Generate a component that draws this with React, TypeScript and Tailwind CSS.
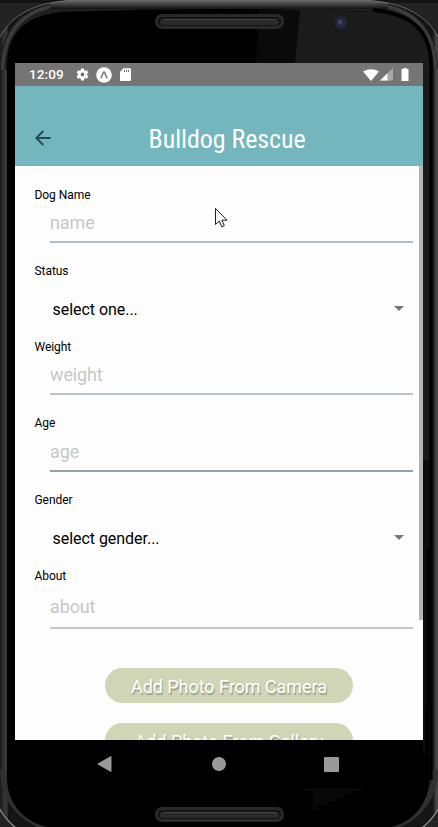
import React from "react";

function PhoneFrame() {
  return (
    <svg className="absolute inset-0" width="438" height="827" viewBox="0 0 438 827" aria-hidden="true">
      <defs>
        <linearGradient id="left" x1="0" x2="1" y1="0" y2="0">
          <stop offset="0" stopColor="#181818" />
          <stop offset="0.35" stopColor="#2b2b2b" />
          <stop offset="0.75" stopColor="#3a3a3a" />
          <stop offset="1" stopColor="#262626" />
        </linearGradient>
        <linearGradient id="top" x1="0" x2="0" y1="0" y2="1">
          <stop offset="0" stopColor="#6a6a6a" />
          <stop offset="0.5" stopColor="#3e3e3e" />
          <stop offset="1" stopColor="#101010" />
        </linearGradient>
        <clipPath id="body">
          <path d="M-1 38C10 16 34 2 72 0H366C404 2 428 16 439 38V807L425 828H15L-1 807Z" />
        </clipPath>
        <clipPath id="face">
          <path d="M7 62C8 30 30 14 65 12Q220 6 373 12C405 14 428 30 429 62V780C428 805 412 827 378 829H60C26 827 8 805 7 780Z" />
        </clipPath>
      </defs>
      <rect width="438" height="827" fill="#232323" />
      <rect width="438" height="3" fill="#141414" />
      <g clipPath="url(#body)">
        <rect width="438" height="827" fill="#151515" />
        <rect width="8" height="827" fill="url(#left)" />
        <rect x="433" width="5" height="827" fill="#252525" />
        <rect x="435" width="3" height="827" fill="#444" />
        <path d="M4 70C5 28 28 9 66 6.500H372C410 9 431 28 434 70" fill="none" stroke="#1f1f1f" strokeWidth="9" />
        <path d="M2.500 70C4 26 28 7 66 4.500H372C410 7 434 26 436 70" fill="none" stroke="#3c3c3c" strokeWidth="3.500" />
        <path d="M50 0H388V9Q220 8 50 9Z" fill="url(#top)" />
        <path d="M3 770C4 803 22 823 60 831M435 770C434 803 416 823 378 831" fill="none" stroke="#303030" strokeWidth="6" />
      </g>
      <path d="M0 37C11 16 34 2 72 .5M366 .5C404 2 427 16 438 37" fill="none" stroke="#707070" strokeWidth="0.9" />
      <path d="M-1 808Q6 820 16 828M439 808Q432 820 422 828" fill="none" stroke="#888" strokeWidth="1.500" />
      <g clipPath="url(#face)">
        <rect width="438" height="827" fill="#000" />
        <path d="M259 0L256 63H300V0Z" fill="#0a0a0a" />
        <path d="M301 0L295 63H423V535H429V0Z" fill="#1b1b1b" />
        <path d="M423 460H429V548H427V710H425V755H423Z" fill="#0c0c0c" />
        <path d="M303 788H362V791H352V794H344V798H336V801H328V805H317V810H313V791H303Z" fill="#080808" />
      </g>
      <path d="M373 10C408 13 430 29 431 62V780" fill="none" stroke="#000" strokeWidth="3.500" />
      <Speaker y={14} />
      <Speaker y={807} />
      <circle cx="341" cy="22.5" r="7" fill="#22232a" />
      <circle cx="341" cy="22.5" r="4.5" fill="#262c48" />
      <circle cx="340" cy="22" r="2" fill="#3e4a7a" />
    </svg>
  );
}

function Speaker({ y }: { y: number }) {
  return (
    <g>
      <rect x="155" y={y} width="129" height="15" rx="7" fill="#292929" />
      <rect x="158" y={y + 3} width="123" height="9" rx="4.5" fill="#121212" />
      <rect x="160" y={y + 5} width="119" height="6" rx="3" fill="#2b2b2b" />
      <path d={`M163 ${y + 5.5}H276`} stroke="#444" />
    </g>
  );
}

function StatusBar() {
  return (
    <div className="flex h-[23px] shrink-0 items-center bg-[#757575] text-white">
      <span className="ml-[14px] w-[46px] text-[13.5px] leading-[23px] font-medium tracking-[0.1px]">12:09</span>
      <svg className="size-[15px]" viewBox="0 0 24 24" fill="currentColor">
        <path d="M19.14 12.94a7.5 7.5 0 0 0 0-1.88l2.03-1.58a.5.5 0 0 0 .12-.61l-1.92-3.32a.5.5 0 0 0-.59-.22l-2.39.96a7 7 0 0 0-1.62-.94l-.36-2.54A.5.5 0 0 0 13.93 2.400h-3.840a.5.5 0 0 0-.47.41l-.36 2.540a7.300 7.300 0 0 0-1.620.94l-2.390-.96a.5.5 0 0 0-.59.22L2.740 8.870a.5.5 0 0 0 .12.61l2.030 1.580a7.500 7.500 0 0 0 0 1.880l-2.030 1.580a.5.5 0 0 0-.12.61l1.920 3.320c.12.22.37.29.59.22l2.390-.96c.5.38 1.030.7 1.620.94l.36 2.540c.05.24.24.41.48.41h3.840c.24 0 .44-.17.47-.41l.36-2.540a7 7 0 0 0 1.620-.94l2.390.96c.22.08.47 0 .59-.22l1.920-3.320a.5.5 0 0 0-.12-.61ZM12 15.100a3.100 3.100 0 1 1 0-6.200 3.100 3.100 0 0 1 0 6.200Z" />
      </svg>
      <svg className="ml-[6px] size-4" viewBox="0 0 16 16">
        <circle cx="8" cy="8" r="7.8" fill="white" />
        <path d="M5 11.300 7.300 5.500Q8 4.300 8.700 5.500L11 11.300" fill="none" stroke="#757575" strokeWidth="1.500" />
      </svg>
      <svg className="ml-[8px] h-[13px] w-[11px]" viewBox="0 0 11 13">
        <path d="M3.500.3H10Q11 .3 11 1.300V12Q11 13 10 13H1Q0 13 0 12V3.800Z" fill="white" />
        <path d="M4.500 2V4M6.500 2V4M8.500 2V4" stroke="#757575" />
      </svg>
      <svg className="ml-auto h-[12px] w-[16px]" viewBox="0 0 16 12">
        <path d="M0 2.500Q8-2 16 2.500L8 12Z" fill="white" />
      </svg>
      <svg className="ml-[1px] h-[13px] w-[13px]" viewBox="0 0 13 13">
        <path d="M13 0V12.500H0Z" fill="#a9a9a9" />
        <path d="M7.500 5.300V12.500H0Z" fill="white" />
      </svg>
      <svg className="mr-[14px] ml-[8px] h-[13px] w-[8px]" viewBox="0 0 8 13">
        <path d="M2.500 0H5.500V1H7.500V13H.5V1H2.500Z" fill="white" />
      </svg>
    </div>
  );
}

function Header() {
  return (
    <header className="flex h-[80px] shrink-0 items-end bg-[#74b6bd]">
      <svg className="mb-5 ml-5 size-4" viewBox="0 0 16 16" fill="none" stroke="#254b50" strokeWidth="1.800">
        <path d="M15.500 8H1.500M8.300 1 1.300 8 8.300 15" />
      </svg>
      <h1 className="mb-[11px] ml-[97.5px] h-8 font-['Roboto_Condensed','Roboto',sans-serif] text-[26px] leading-8 font-normal tracking-[-0.06px] whitespace-nowrap text-white">
        Bulldog Rescue
      </h1>
    </header>
  );
}

function Label({ children }: { children: string }) {
  return <div className="ml-[19.5px] h-4 text-[12px] leading-[17px] tracking-[-0.05px] text-black">{children}</div>;
}

function InputField({ label, hint, height, line }: { label: string; hint: string; height: string; line: string }) {
  return (
    <div className={height}>
      <Label>{label}</Label>
      <div className={`mr-[10px] ml-[35px] flex items-center border-b-2 pt-[2px] text-[18px] leading-6 tracking-[-0.12px] text-[#c7c7c7] ${line}`}>
        {hint}
      </div>
    </div>
  );
}

function SelectField({ label, value, height }: { label: string; value: string; height: string }) {
  return (
    <div className={height}>
      <Label>{label}</Label>
      <div className="mt-[18px] mr-[19px] ml-[37.5px] flex h-[26px] items-center justify-between text-[16px] tracking-[-0.04px] text-black">
        {value}
        <svg className="-mt-1 h-[5px] w-[10px]" viewBox="0 0 10 5">
          <path d="M0 0H10L5 5Z" fill="#777" />
        </svg>
      </div>
    </div>
  );
}

function PhotoButton({ children }: { children: string }) {
  return (
    <button className="mb-5 ml-[90px] flex h-[35px] w-[248px] shrink-0 items-center justify-center rounded-full bg-[#d0d5b5] pt-[3px] text-[18px] leading-6 tracking-[-0.05px] text-white [text-shadow:1px_2px_1px_#999d88]">
      {children}
    </button>
  );
}

export default function App() {
  return (
    <div className="relative h-[827px] w-[438px] overflow-hidden font-['Roboto',sans-serif]">
      <PhoneFrame />
      <div className="relative flex h-full flex-col px-[15px] pt-[63px]">
        <div className="flex h-[677px] flex-col overflow-hidden bg-[#fdfdfd]">
          <StatusBar />
          <Header />
          <main className="relative flex min-h-0 flex-1 flex-col overflow-hidden pt-[21px]">
            <InputField label="Dog Name" hint="name" height="h-[76px] shrink-0" line="h-10 border-[#b0bac3]" />
            <SelectField label="Status" value="select one..." height="h-[76px] shrink-0" />
            <InputField label="Weight" hint="weight" height="h-[76px] shrink-0" line="h-10 border-[#bdc4c9]" />
            <InputField label="Age" hint="age" height="h-[77px] shrink-0" line="h-[41px] border-[#91a0ad]" />
            <SelectField label="Gender" value="select gender..." height="h-[76px] shrink-0" />
            <InputField label="About" hint="about" height="h-[100px] shrink-0" line="h-[45px] border-[#c2c7cc]" />
            <PhotoButton>Add Photo From Camera</PhotoButton>
            <PhotoButton>Add Photo From Gallery</PhotoButton>
            <div className="absolute top-0 right-0 h-[454px] w-1 bg-[#b4b4b4]" />
            <svg className="absolute top-[42px] left-[200px] h-[20px] w-[13px]" viewBox="0 0 13 20">
              <path d="M.5.5V16.500L4.300 13 6.800 18.800 9.300 17.700 6.900 12.200H12Z" fill="white" stroke="#1b1b28" />
            </svg>
          </main>
        </div>
        <nav className="flex h-[48px] items-center text-[#999]">
          <svg className="ml-[82px] h-4 w-[15px]" viewBox="0 0 15 16">
            <path d="M14 .5V15.500L.8 8Z" fill="currentColor" stroke="currentColor" strokeLinejoin="round" />
          </svg>
          <div className="ml-[100px] size-[14px] rounded-full bg-[#999]" />
          <div className="ml-[98px] size-[15px] rounded-[1px] bg-[#999]" />
        </nav>
      </div>
    </div>
  );
}
